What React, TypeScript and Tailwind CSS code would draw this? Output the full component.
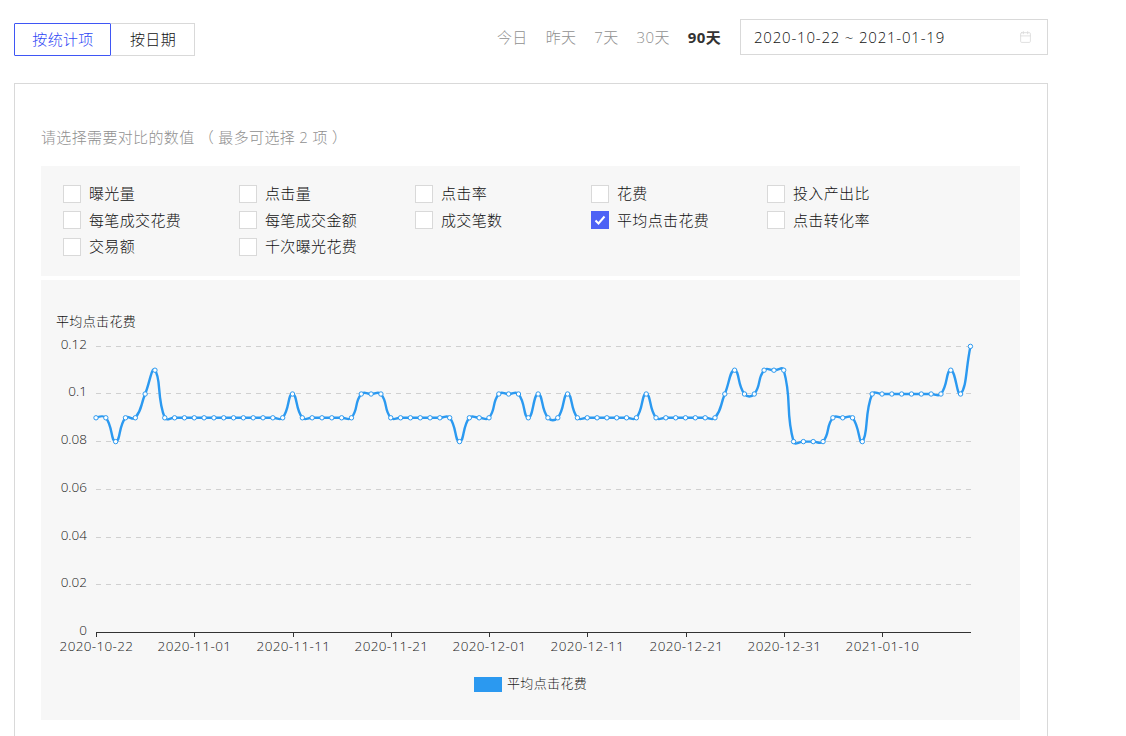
import { Calendar } from "lucide-react";

const font = { fontFamily: '"Open Sans", "Noto Sans CJK SC", sans-serif' };

const options = [
  "曝光量", "点击量", "点击率", "花费", "投入产出比",
  "每笔成交花费", "每笔成交金额", "成交笔数", "平均点击花费", "点击转化率",
  "交易额", "千次曝光花费",
];

const ranges = ["今日", "昨天", "7天", "30天"];

// one value per day, 2020-10-22 .. 2021-01-19
const values = [
  9, 9, 8, 9, 9, 10, 11, 9, 9, 9, 9, 9, 9, 9, 9, 9, 9, 9, 9, 9,
  10, 9, 9, 9, 9, 9, 9, 10, 10, 10, 9, 9, 9, 9, 9, 9, 9, 8, 9, 9,
  9, 10, 10, 10, 9, 10, 9, 9, 10, 9, 9, 9, 9, 9, 9, 9, 10, 9, 9, 9,
  9, 9, 9, 9, 10, 11, 10, 10, 11, 11, 11, 8, 8, 8, 8, 9, 9, 9, 8, 10,
  10, 10, 10, 10, 10, 10, 10, 11, 10, 12,
];

const X0 = 96;
const STEP = 9.825;
const Y0 = 632;
const UNIT = 23.8; // px per 0.01

const points = values.map((v, i) => [X0 + i * STEP, Y0 - v * UNIT] as const);

function smoothPath(pts: readonly (readonly [number, number])[]) {
  const smooth = 0.5;
  let d = `M${pts[0][0]} ${pts[0][1]}`;
  let cp = pts[0];
  for (let i = 1; i < pts.length; i++) {
    const cur = pts[i];
    const prev = pts[i - 1];
    const next = pts[i + 1] ?? cur;
    const vx = next[0] - prev[0];
    const vy = next[1] - prev[1];
    const lp = Math.hypot(cur[0] - prev[0], cur[1] - prev[1]);
    const ln = Math.hypot(next[0] - cur[0], next[1] - cur[1]);
    const total = lp + ln || 1;
    const c2 = [cur[0] - (vx * smooth * lp) / total, cur[1] - (vy * smooth * lp) / total];
    d += `C${cp[0]} ${cp[1]} ${c2[0]} ${c2[1]} ${cur[0]} ${cur[1]}`;
    cp = [cur[0] + (vx * smooth * ln) / total, cur[1] + (vy * smooth * ln) / total];
  }
  return d;
}

const yTicks = [
  { label: "0.12", y: 346 },
  { label: "0.1", y: 393 },
  { label: "0.08", y: 441 },
  { label: "0.06", y: 489 },
  { label: "0.04", y: 537 },
  { label: "0.02", y: 584 },
  { label: "0", y: 632 },
];

const xTicks = [
  "2020-10-22", "2020-11-01", "2020-11-11", "2020-11-21", "2020-12-01",
  "2020-12-11", "2020-12-21", "2020-12-31", "2021-01-10",
];

function Chart() {
  return (
    <svg viewBox="41 280 979 440" className="block h-[440px] w-[979px]" style={font}>
      <text x="56" y="326" fontSize="13" fill="#111">平均点击花费</text>
      {yTicks.map((t) => (
        <g key={t.label}>
          {t.label !== "0" && (
            <line x1="96" x2="971" y1={t.y + 0.5} y2={t.y + 0.5} stroke="#d0d0d0" strokeDasharray="5 5" />
          )}
          <text x="87" y={t.y + 3} textAnchor="end" fontSize="13.5" letterSpacing="0" fill="#222">{t.label}</text>
        </g>
      ))}
      <line x1="96" x2="971" y1="632.5" y2="632.5" stroke="#333" />
      {xTicks.map((label, i) => {
        const x = Math.round(X0 + i * 10 * STEP) + 0.5;
        return (
          <g key={label}>
            <line x1={x} x2={x} y1="632" y2="637" stroke="#333" />
            <text x={x} y="651" textAnchor="middle" fontSize="13.5" fill="#222">{label}</text>
          </g>
        );
      })}
      <path d={smoothPath(points)} fill="none" stroke="#2b99f0" strokeWidth="2.4" />
      {points.map(([x, y], i) => (
        <circle key={i} cx={x} cy={y} r="2.2" fill="#fff" stroke="#2b99f0" />
      ))}
      <rect x="474" y="677" width="28" height="15" fill="#2b99f0" />
      <text x="507" y="688" fontSize="13" fill="#222">平均点击花费</text>
    </svg>
  );
}

export default function App() {
  return (
    <div className="h-[736px] w-[1126px] overflow-hidden bg-white text-[15px] font-light tracking-[0.35px] text-[#111]" style={font}>
      <div className="w-[1048px] pl-[14px] pt-[19px]">
        <div className="flex items-start justify-between">
          <div className="mt-[4px] flex h-[33px]">
            <div className="flex w-[97px] items-center justify-center rounded-[1px] border border-[#3f56f5] pl-px text-[#3048f5]">按统计项</div>
            <div className="flex w-[84px] items-center justify-center border border-l-0 border-[#d9d9d9] pl-px">按日期</div>
          </div>
          <div className="flex items-center">
            <div className="flex gap-[18px] text-[#909090]">
              {ranges.map((r) => (
                <span key={r}>{r}</span>
              ))}
              <span className="font-bold text-[#333]">90天</span>
            </div>
            <div className="ml-[19px] flex h-[36px] w-[308px] items-center justify-between border border-[#d9d9d9] pl-[13px] pr-[15px]">
              <span className="tracking-[0.8px]">2020-10-22 ~ 2021-01-19</span>
              <Calendar className="h-[14px] w-[13px] text-[#d9d9d9]" strokeWidth={1.5} />
            </div>
          </div>
        </div>

        <div className="mt-[27px] h-[700px] border border-[#d9d9d9] pl-[26px] pr-[27px] pt-[42px]">
          <div className="text-[#909090]">请选择需要对比的数值 （ 最多可选择 2 项 ）</div>
          <div className="mt-[17px] grid h-[110px] grid-cols-[repeat(5,176px)] content-start gap-y-[8.5px] bg-[#f7f7f7] pl-[22px] pt-[19px]">
            {options.map((o) => {
              const checked = o === "平均点击花费";
              return (
                <div key={o} className="flex h-[18px] items-center gap-[8px]">
                  {checked ? (
                    <div className="flex h-[18px] w-[18px] items-center justify-center bg-[#4d62f5]">
                      <svg viewBox="0 0 18 18" className="h-[18px] w-[18px]" fill="none" stroke="#fff" strokeWidth="2">
                        <path d="M4.5 9.5l3 3 6-7" />
                      </svg>
                    </div>
                  ) : (
                    <div className="h-[18px] w-[18px] border border-[#d9d9d9] bg-white" />
                  )}
                  <span>{o}</span>
                </div>
              );
            })}
          </div>
          <div className="mt-[4px] bg-[#f7f7f7]">
            <Chart />
          </div>
        </div>
      </div>
    </div>
  );
}
